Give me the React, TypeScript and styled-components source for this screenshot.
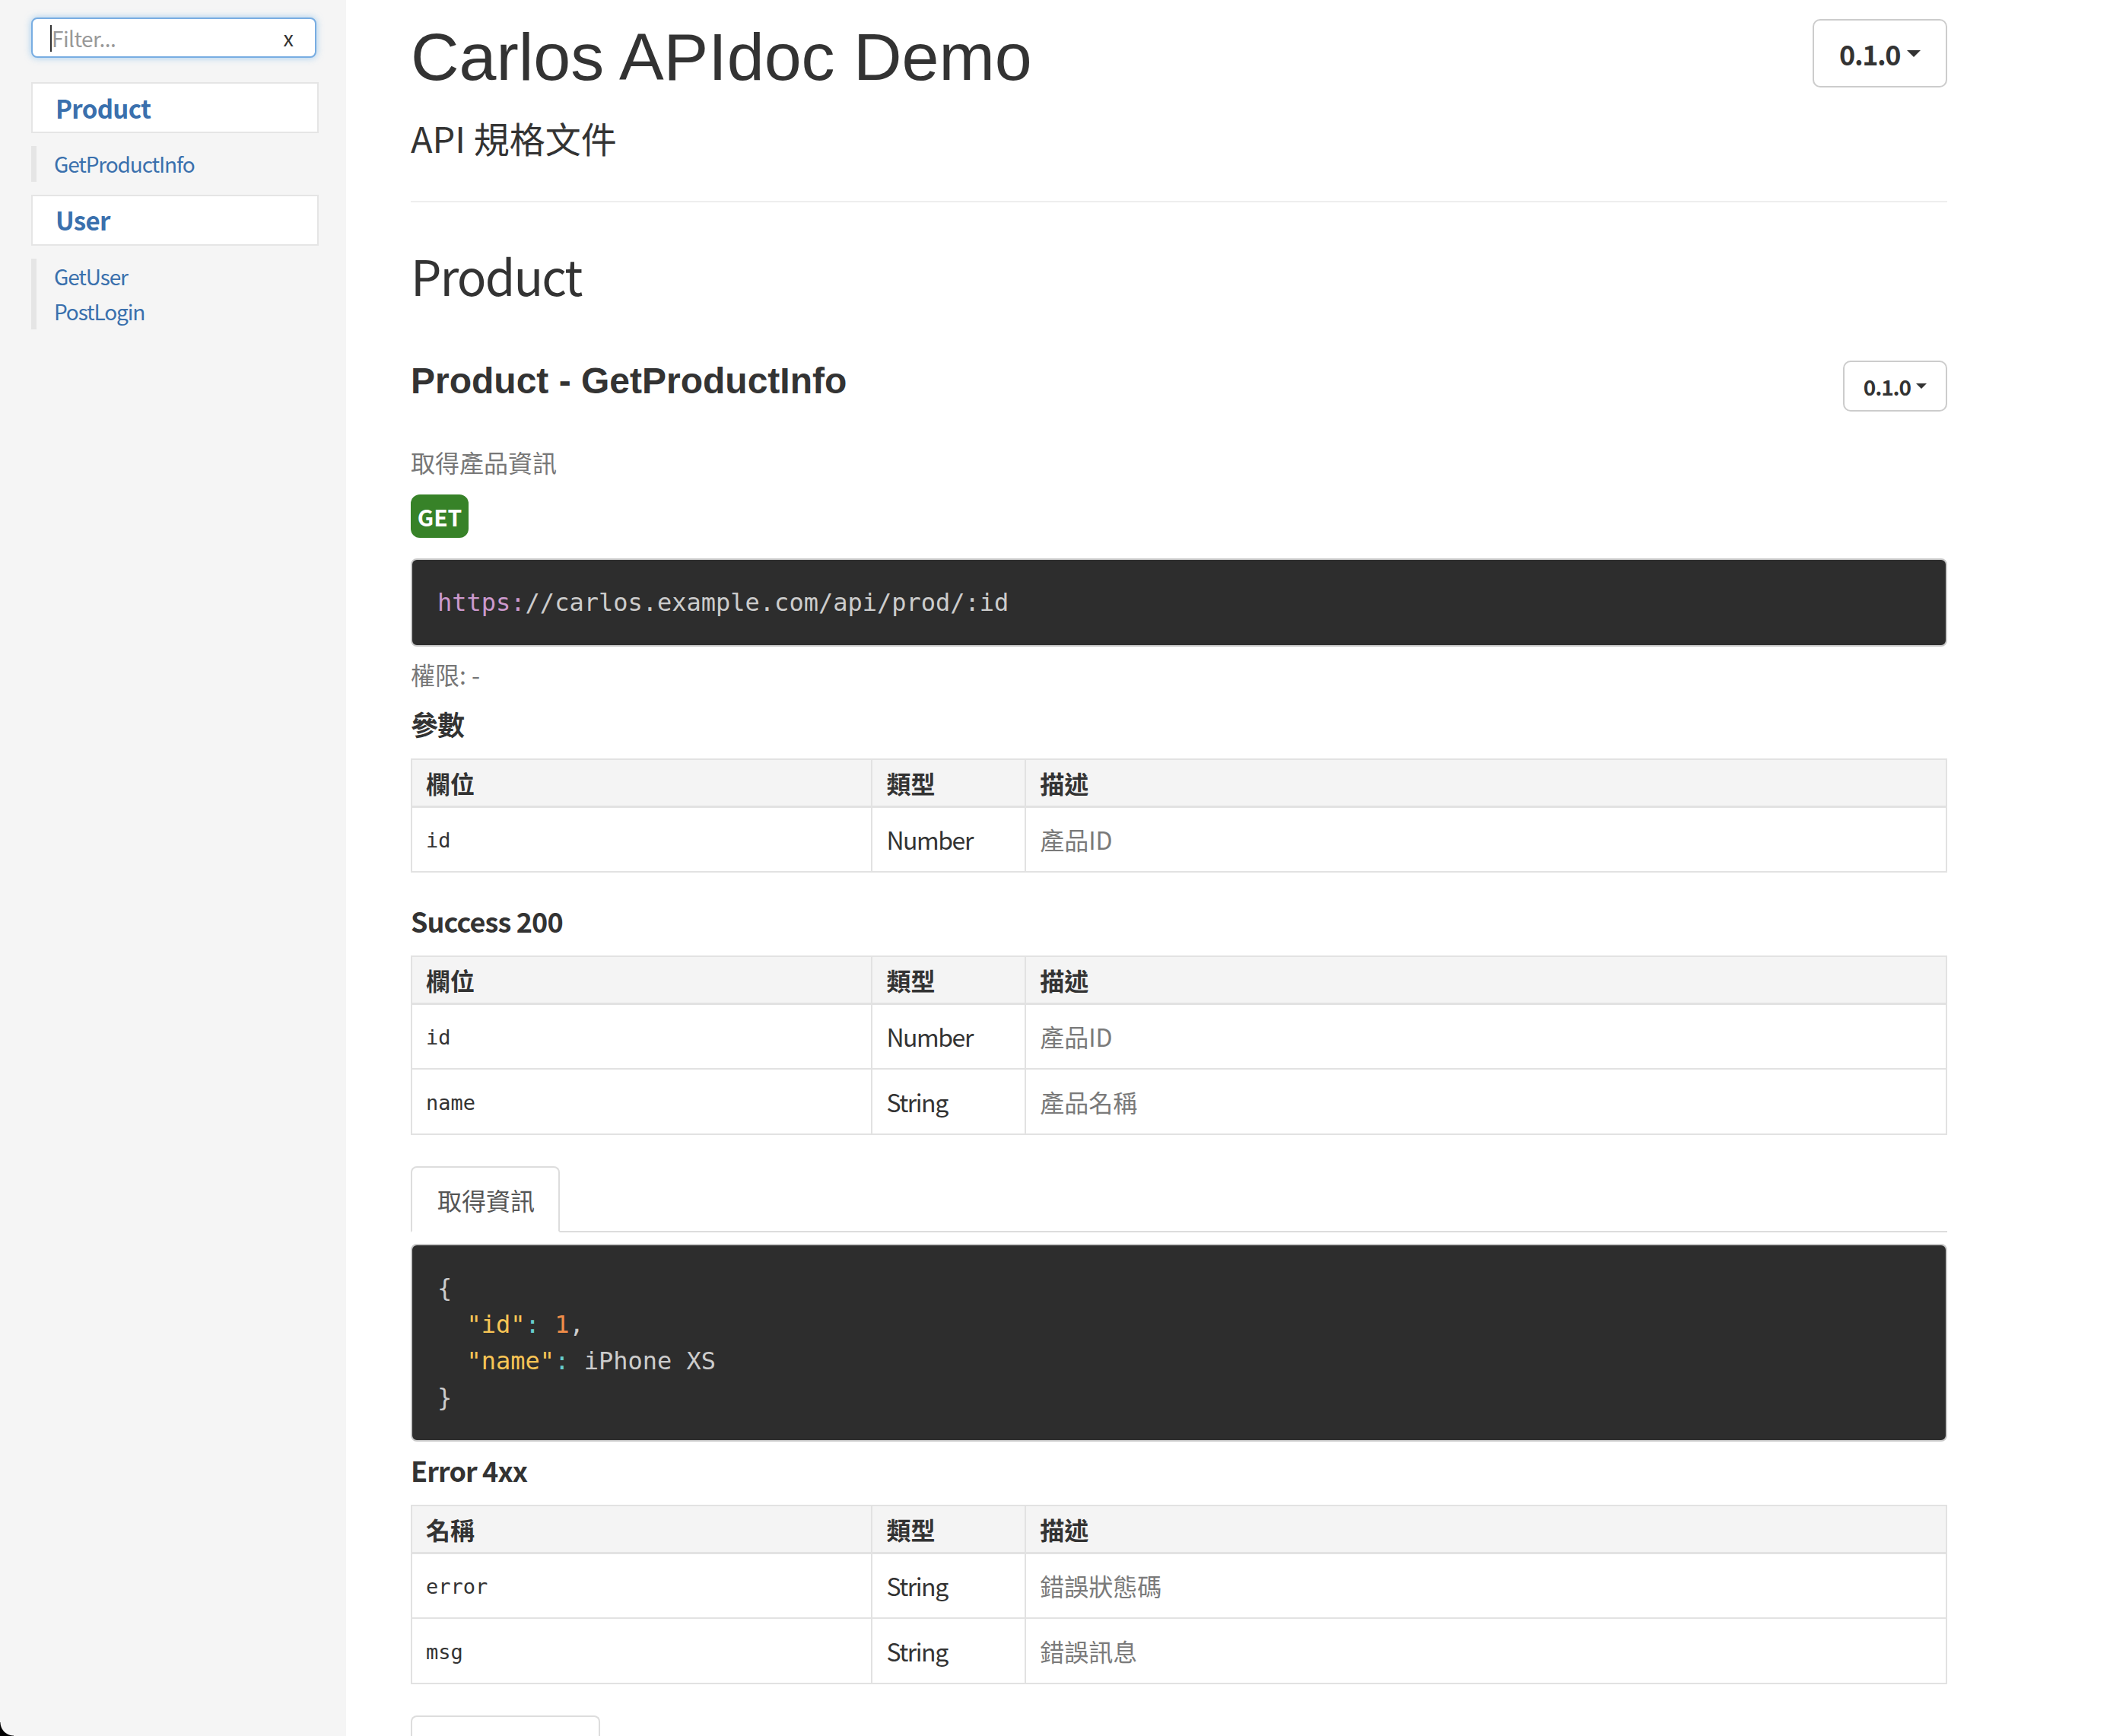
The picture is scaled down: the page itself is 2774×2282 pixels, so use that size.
import React from "react";
import styled, { createGlobalStyle } from "styled-components";

const GlobalStyle = createGlobalStyle`
  html, body {
    margin: 0;
    padding: 0;
    background: #fff;
  }
  body {
    font-family: "Noto Sans CJK TC", "Noto Sans", sans-serif;
    color: #333;
  }
  * {
    box-sizing: border-box;
  }
`;

const sans = `"Noto Sans CJK TC", "Noto Sans", sans-serif`;
const helvetica = `"Liberation Sans", Arial, "Noto Sans CJK TC", sans-serif`;
const mono = `"DejaVu Sans Mono", "Liberation Mono", monospace`;
const linkBlue = "#3a70ad";

type Field = { name: string; type: string; desc: string };

const params: Field[] = [{ name: "id", type: "Number", desc: "產品ID" }];
const success: Field[] = [
  { name: "id", type: "Number", desc: "產品ID" },
  { name: "name", type: "String", desc: "產品名稱" },
];
const errors: Field[] = [
  { name: "error", type: "String", desc: "錯誤狀態碼" },
  { name: "msg", type: "String", desc: "錯誤訊息" },
];

const nav = [
  { group: "Product", items: ["GetProductInfo"] },
  { group: "User", items: ["GetUser", "PostLogin"] },
];

export default function App() {
  return (
    <>
      <GlobalStyle />
      <Page>
        <Sidebar>
          <FilterBox>
            <FilterInput placeholder="Filter..." />
            <Caret />
            <ClearButton>x</ClearButton>
          </FilterBox>
          {nav.map((g) => (
            <React.Fragment key={g.group}>
              <NavHeader>{g.group}</NavHeader>
              <NavList>
                {g.items.map((it) => (
                  <NavItem key={it}>{it}</NavItem>
                ))}
              </NavList>
            </React.Fragment>
          ))}
        </Sidebar>

        <Main>
          <Header>
            <div>
              <Title>Carlos APIdoc Demo</Title>
              <Subtitle>API 規格文件</Subtitle>
            </div>
            <VersionButton $size="lg">
              0.1.0 <CaretDown $size="lg" />
            </VersionButton>
          </Header>
          <Divider />

          <SectionTitle>Product</SectionTitle>

          <EndpointHeader>
            <EndpointTitle>Product - GetProductInfo</EndpointTitle>
            <VersionButton $size="sm">
              0.1.0 <CaretDown $size="sm" />
            </VersionButton>
          </EndpointHeader>

          <Description>取得產品資訊</Description>
          <MethodBadge>GET</MethodBadge>
          <CodeBlock $gap={27}>
            <Keyword>https:</Keyword>//carlos.example.com/api/prod/:id
          </CodeBlock>
          <Permission>權限: -</Permission>

          <SubHeading $gap={17}>參數</SubHeading>
          <FieldTable head="欄位" rows={params} />

          <SubHeading $gap={39}>Success 200</SubHeading>
          <FieldTable head="欄位" rows={success} />

          <TabBar>
            <Tab>取得資訊</Tab>
          </TabBar>
          <CodeBlock $gap={15}>
            {"{"}
            {"\n  "}
            <Prop>"id"</Prop>
            <Op>:</Op> <Num>1</Num>,{"\n  "}
            <Prop>"name"</Prop>
            <Op>:</Op> iPhone XS{"\n"}
            {"}"}
          </CodeBlock>

          <SubHeading $gap={13}>Error 4xx</SubHeading>
          <FieldTable head="名稱" rows={errors} />

          <TabBar>
            <Tab $width={249} />
          </TabBar>
          <BottomSpace />
        </Main>
      </Page>
      <WindowCorner />
    </>
  );
}

function FieldTable({ head, rows }: { head: string; rows: Field[] }) {
  return (
    <Table>
      <colgroup>
        <col style={{ width: "30%" }} />
        <col style={{ width: "10%" }} />
        <col style={{ width: "60%" }} />
      </colgroup>
      <thead>
        <tr>
          <Th>{head}</Th>
          <Th>類型</Th>
          <Th>描述</Th>
        </tr>
      </thead>
      <tbody>
        {rows.map((r) => (
          <tr key={r.name}>
            <Td>
              <FieldName>{r.name}</FieldName>
            </Td>
            <Td $latin>{r.type}</Td>
            <Td $muted>{r.desc}</Td>
          </tr>
        ))}
      </tbody>
    </Table>
  );
}

const Page = styled.div`
  display: flex;
  min-height: 100vh;
`;

const Sidebar = styled.aside`
  flex: none;
  width: 455px;
  min-height: 100vh;
  background: #f5f5f5;
  padding: 23px 36px 0 41px;
`;

const FilterBox = styled.div`
  position: relative;
  width: 375px;
  height: 53px;
  background: #fff;
  border: 2px solid #78ade2;
  border-radius: 8px;
  box-shadow: 0 0 10px rgba(102, 175, 233, 0.6);
  display: flex;
  align-items: center;
`;

const FilterInput = styled.input`
  flex: 1;
  min-width: 0;
  height: 100%;
  border: none;
  outline: none;
  background: transparent;
  padding: 0 0 0 25px;
  font-family: ${sans};
  font-size: 28px;
  letter-spacing: -0.02em;
  color: #333;

  &::placeholder {
    color: #999;
  }
`;

const Caret = styled.span`
  position: absolute;
  left: 23px;
  top: 8px;
  width: 2px;
  height: 35px;
  background: #333;
`;

const ClearButton = styled.span`
  font-family: ${sans};
  font-size: 27px;
  color: #333;
  padding-right: 28px;
  line-height: 1;
`;

const NavHeader = styled.div`
  margin-top: 32px;
  height: 67px;
  background: #fff;
  border: 2px solid #e5e5e5;
  padding-left: 30px;
  display: flex;
  align-items: center;
  font-size: 33px;
  font-weight: 700;
  letter-spacing: -0.02em;
  color: ${linkBlue};
`;

const NavList = styled.div`
  margin: 17px 0 -15px;
  border-left: 7px solid #e5e5e5;
`;

const NavItem = styled.div`
  height: 46.5px;
  padding-left: 23px;
  display: flex;
  align-items: center;
  font-size: 28px;
  letter-spacing: -0.04em;
  color: ${linkBlue};
`;

const Main = styled.main`
  flex: none;
  width: 2020px;
  margin-left: 85px;
`;

const Header = styled.div`
  display: flex;
  justify-content: space-between;
  align-items: flex-start;
`;

const Title = styled.h1`
  margin: 26px 0 0;
  font-family: ${helvetica};
  font-size: 88px;
  line-height: 97px;
  font-weight: 400;
  color: #333;
`;

const Subtitle = styled.div`
  margin-top: 28px;
  font-size: 47px;
  line-height: 60px;
  color: #333;
`;

const VersionButton = styled.button<{ $size: "lg" | "sm" }>`
  margin-top: ${(p) => (p.$size === "lg" ? 25 : 7)}px;
  height: ${(p) => (p.$size === "lg" ? 90 : 67)}px;
  padding: ${(p) => (p.$size === "lg" ? "0 33px" : "0 25px")};
  display: flex;
  align-items: center;
  gap: ${(p) => (p.$size === "lg" ? 9 : 7)}px;
  background: #fff;
  border: 2px solid #ccc;
  border-radius: 10px;
  font-family: ${sans};
  font-size: ${(p) => (p.$size === "lg" ? 36 : 28)}px;
  font-weight: 700;
  letter-spacing: -0.04em;
  color: #333;
`;

const CaretDown = styled.span<{ $size: "lg" | "sm" }>`
  width: 0;
  height: 0;
  border-top: ${(p) => (p.$size === "lg" ? 9 : 7)}px solid #333;
  border-left: ${(p) => (p.$size === "lg" ? 9 : 7.5)}px solid transparent;
  border-right: ${(p) => (p.$size === "lg" ? 9 : 7.5)}px solid transparent;
`;

const Divider = styled.hr`
  margin: 53px 0 0;
  border: none;
  border-top: 2px solid #eee;
`;

const SectionTitle = styled.h2`
  margin: 55px 0 0;
  font-size: 64px;
  line-height: 80px;
  font-weight: 400;
  letter-spacing: -0.03em;
  color: #333;
`;

const EndpointHeader = styled.div`
  margin-top: 66px;
  display: flex;
  justify-content: space-between;
  align-items: flex-start;
`;

const EndpointTitle = styled.h3`
  margin: 0;
  font-family: ${helvetica};
  font-size: 48px;
  line-height: 67px;
  font-weight: 700;
  color: #333;
`;

const Description = styled.p`
  margin: 42px 0 0;
  font-size: 32px;
  line-height: 48px;
  color: #777;
`;

const MethodBadge = styled.div`
  margin-top: 19px;
  width: 76px;
  height: 57px;
  border-radius: 12px;
  background: #378228;
  color: #fff;
  font-size: 30px;
  font-weight: 700;
  display: flex;
  align-items: center;
  justify-content: center;
`;

const CodeBlock = styled.pre<{ $gap: number }>`
  margin: ${(p) => p.$gap}px 0 0;
  padding: 32px 33px;
  background: #2d2d2d;
  border: 2px solid #c9c9c9;
  border-radius: 8px;
  font-family: ${mono};
  font-size: 32px;
  line-height: 48px;
  color: #ccc;
  white-space: pre;
`;

const Keyword = styled.span`
  color: #cc99cd;
`;

const Prop = styled.span`
  color: #f8c555;
`;

const Op = styled.span`
  color: #67cdcc;
`;

const Num = styled.span`
  color: #f08d49;
`;

const Permission = styled.p`
  margin: 12px 0 0;
  font-size: 32px;
  line-height: 48px;
  color: #777;
`;

const SubHeading = styled.h4<{ $gap: number }>`
  margin: ${(p) => p.$gap}px 0 0;
  font-size: 36px;
  line-height: 48px;
  font-weight: 600;
  letter-spacing: -0.025em;
  color: #333;
`;

const Table = styled.table`
  margin-top: 22px;
  width: 100%;
  table-layout: fixed;
  border-collapse: collapse;
  border: 2px solid #e2e2e2;
`;

const Th = styled.th`
  height: 62px;
  padding: 0 18px;
  text-align: left;
  vertical-align: middle;
  background: #f4f4f4;
  border: 2px solid #e2e2e2;
  border-bottom-width: 3px;
  font-size: 32px;
  font-weight: 700;
  color: #333;
`;

const Td = styled.td<{ $muted?: boolean; $latin?: boolean }>`
  height: 86px;
  padding: 0 18px;
  vertical-align: middle;
  border: 2px solid #e2e2e2;
  font-size: 32px;
  letter-spacing: ${(p) => (p.$latin ? "-0.045em" : "0")};
  color: ${(p) => (p.$muted ? "#7a7a7a" : "#333")};
`;

const FieldName = styled.code`
  font-family: ${mono};
  font-size: 27px;
  color: #333;
  position: relative;
  top: -3px;
`;

const TabBar = styled.div`
  margin-top: 41px;
  display: flex;
  border-bottom: 2px solid #ddd;
`;

const Tab = styled.div<{ $width?: number }>`
  margin-bottom: -2px;
  height: 87px;
  ${(p) => (p.$width ? `width: ${p.$width}px;` : "")}
  padding: 0 31px 0 33px;
  display: flex;
  align-items: center;
  background: #fff;
  border: 2px solid #ddd;
  border-bottom-color: #fff;
  border-radius: 8px 8px 0 0;
  font-size: 32px;
  color: #555;
`;

const BottomSpace = styled.div`
  height: 120px;
`;

const WindowCorner = styled.div`
  position: fixed;
  left: 0;
  bottom: 0;
  width: 18px;
  height: 18px;
  background: radial-gradient(circle at 100% 0, transparent 17px, #000 18px);
  pointer-events: none;
`;
